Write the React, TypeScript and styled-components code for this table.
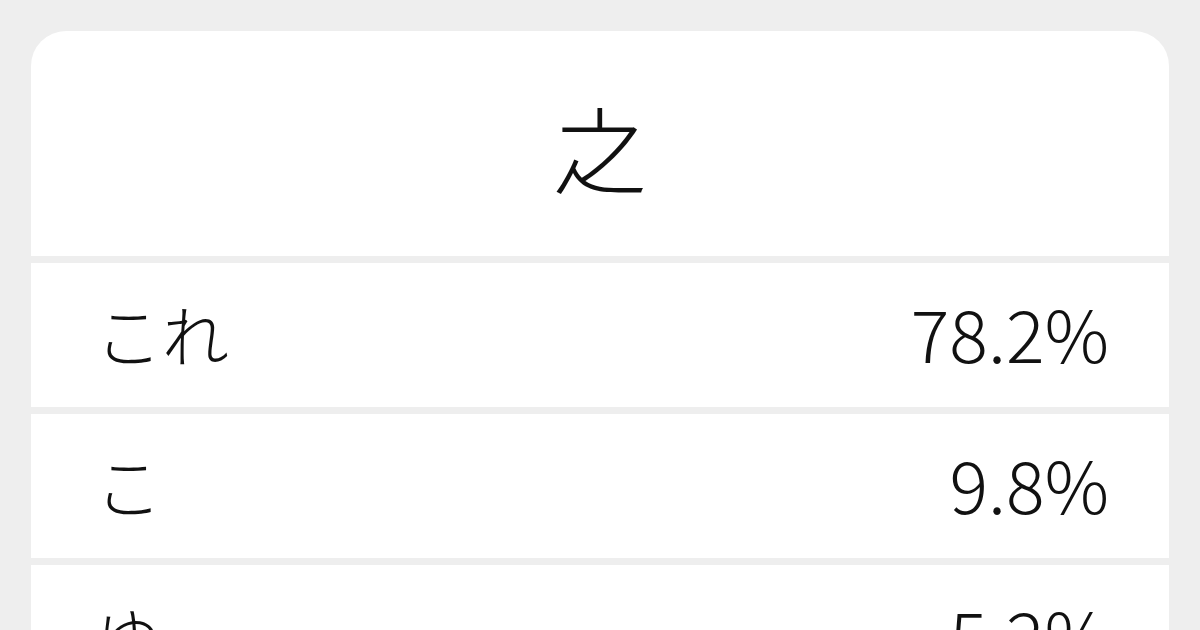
import styled, { createGlobalStyle } from 'styled-components';

const GlobalStyle = createGlobalStyle`
  html, body {
    margin: 0;
    padding: 0;
    background: #eeeeee;
  }
  body {
    font-family: "Noto Sans CJK JP", "Noto Sans", sans-serif;
    color: #111111;
  }
`;

const Page = styled.div`
  width: 1200px;
  height: 630px;
  overflow: hidden;
  padding: 31px 31px 0;
  box-sizing: border-box;
`;

const Card = styled.div`
  display: flex;
  flex-direction: column;
  gap: 7px;
  border-radius: 35px;
  overflow: hidden;
`;

const Header = styled.div`
  display: flex;
  align-items: center;
  justify-content: center;
  height: 225px;
  background: #ffffff;
  font-size: 94px;
  font-weight: 300;
  line-height: 1;
  padding-top: 4px;
  box-sizing: border-box;
`;

const Row = styled.div`
  display: flex;
  align-items: center;
  justify-content: space-between;
  height: 144px;
  padding: 0 60px 6px 64px;
  box-sizing: border-box;
  background: #ffffff;
  font-weight: 300;
  line-height: 1;
`;

const Reading = styled.span`
  font-size: 67px;
`;

const Share = styled.span`
  font-size: 72px;
`;

const readings = [
  { kana: 'これ', pct: '78.2%' },
  { kana: 'こ', pct: '9.8%' },
  { kana: 'ゆ', pct: '5.2%' },
];

const App = () => {
  return (
    <Page>
      <GlobalStyle />
      <Card>
        <Header>之</Header>
        {readings.map((r) => (
          <Row key={r.kana}>
            <Reading>{r.kana}</Reading>
            <Share>{r.pct}</Share>
          </Row>
        ))}
      </Card>
    </Page>
  );
};

export default App;
